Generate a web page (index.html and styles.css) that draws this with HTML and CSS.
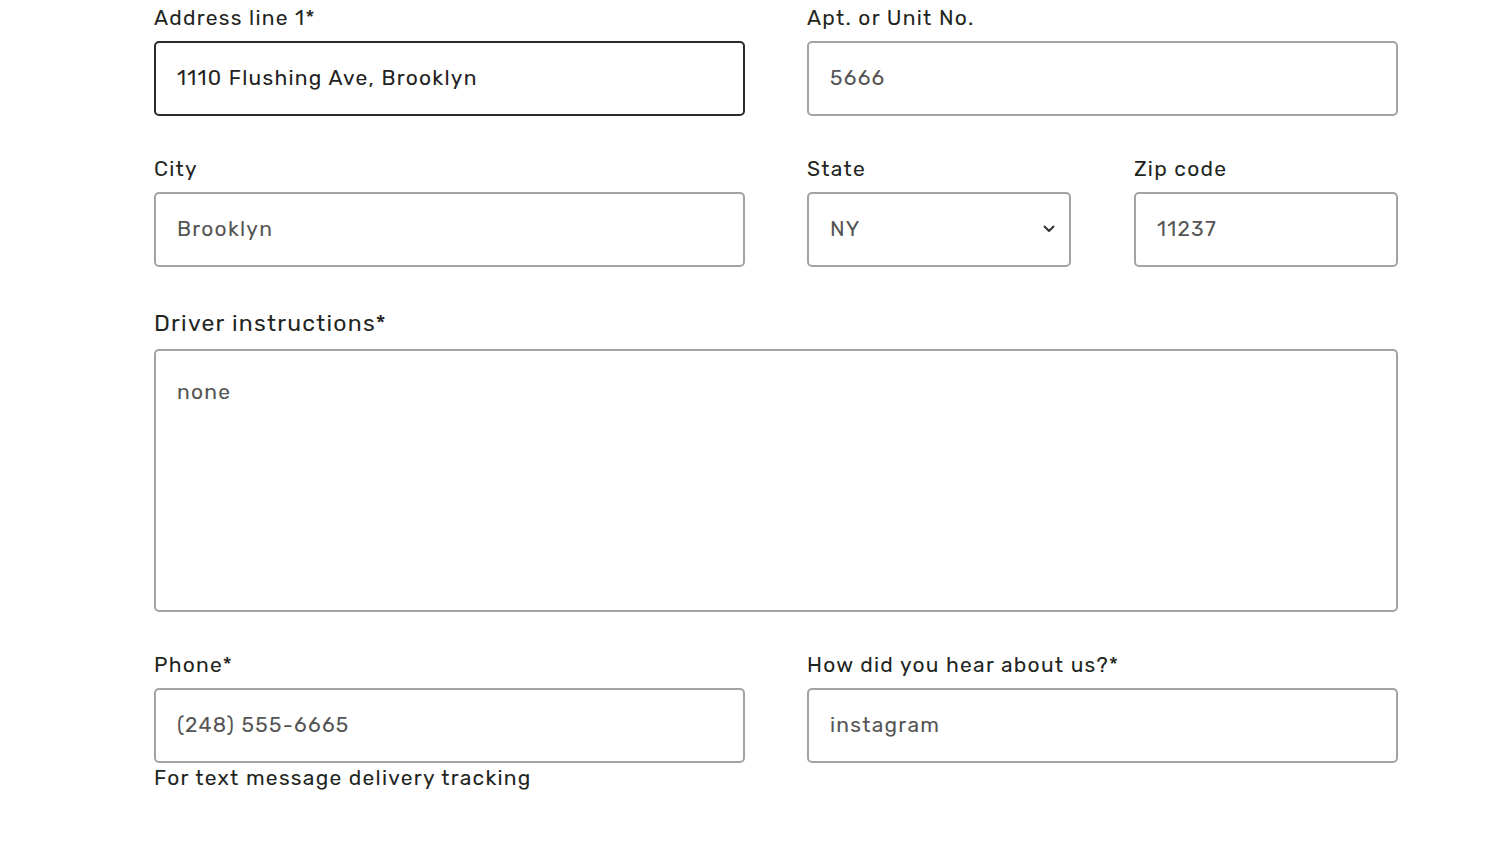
FILE: index.html
```html
<!DOCTYPE html>
<html lang="en">
<head>
<meta charset="utf-8">
<title>Delivery address</title>
<link rel="stylesheet" href="styles.css">
</head>
<body>
<form class="form">
  <div class="row two">
    <div class="field">
      <label class="label">Address line 1*</label>
      <div class="input focused">1110 Flushing Ave, Brooklyn</div>
    </div>
    <div class="field">
      <label class="label">Apt. or Unit No.</label>
      <div class="input">5666</div>
    </div>
  </div>
  <div class="row two">
    <div class="field">
      <label class="label">City</label>
      <div class="input">Brooklyn</div>
    </div>
    <div class="row two inner">
      <div class="field">
        <label class="label">State</label>
        <div class="input select">
          <span>NY</span>
          <svg class="chev" width="12" height="8" viewBox="0 0 12 8"><path d="M1.5 1.5 L6 6 L10.5 1.5" fill="none" stroke="#333" stroke-width="2" stroke-linecap="round" stroke-linejoin="round"/></svg>
        </div>
      </div>
      <div class="field">
        <label class="label">Zip code</label>
        <div class="input">11237</div>
      </div>
    </div>
  </div>
  <div class="row one">
    <div class="field">
      <label class="label big">Driver instructions*</label>
      <div class="textarea">none</div>
    </div>
  </div>
  <div class="row two">
    <div class="field">
      <label class="label">Phone*</label>
      <div class="input">(248) 555-6665</div>
      <div class="help">For text message delivery tracking</div>
    </div>
    <div class="field">
      <label class="label">How did you hear about us?*</label>
      <div class="input">instagram</div>
    </div>
  </div>
</form>
</body>
</html>
```
FILE: styles.css
```css
html, body {
  margin: 0;
  padding: 0;
  background: #ffffff;
}
body {
  font-family: "Rubik", "Inter", "Noto Sans", sans-serif;
  color: #1f2622;
}
.form {
  width: 1244px;
  margin-left: 154px;
  padding-top: 6px;
  display: flex;
  flex-direction: column;
  gap: 41px;
}
.row.two {
  display: grid;
  grid-template-columns: 591px 591px;
  column-gap: 62px;
}
.row.two.inner {
  grid-template-columns: 264px 264px;
  column-gap: 63px;
}
.field {
  display: flex;
  flex-direction: column;
}
.label {
  display: block;
  font-size: 21px;
  line-height: 24px;
  letter-spacing: 1.25px;
  margin-bottom: 11px;
  color: #1f2622;
}
.label.big {
  font-size: 23px;
  line-height: 26px;
  margin-bottom: 13px;
  margin-top: 2px;
}
.input {
  box-sizing: border-box;
  height: 75px;
  border: 2px solid #a3a3a3;
  border-radius: 5px;
  padding: 0 21px 2px;
  display: flex;
  align-items: center;
  font-size: 21px;
  letter-spacing: 1.25px;
  color: #555555;
}
.input.focused {
  border-color: #2b2b2b;
  color: #222222;
}
.select {
  justify-content: space-between;
  padding-right: 14px;
}
.chev {
  display: block;
}
.textarea {
  box-sizing: border-box;
  height: 263px;
  border: 2px solid #a3a3a3;
  border-radius: 5px;
  padding: 28px 21px;
  font-size: 21px;
  line-height: 26px;
  letter-spacing: 1.25px;
  color: #555555;
}
.help {
  margin-top: 3px;
  font-size: 21px;
  line-height: 24px;
  letter-spacing: 1.25px;
  color: #1f2622;
}
```
